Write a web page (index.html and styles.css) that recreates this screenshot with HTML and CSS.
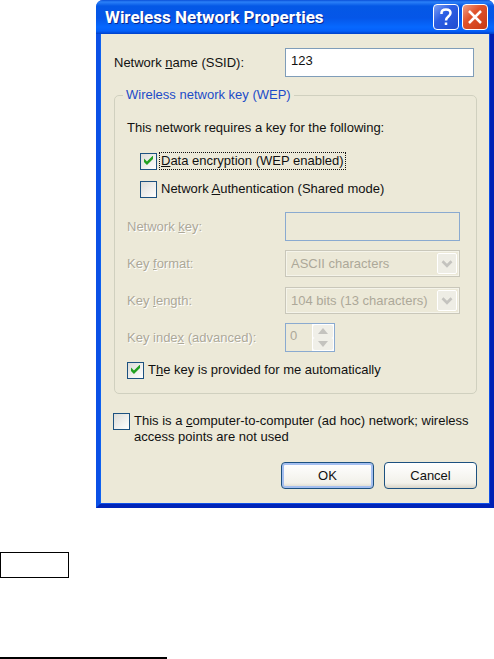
FILE: index.html
```html
<!DOCTYPE html>
<html lang="en">

<head>
  <meta charset="UTF-8">
  <meta name="viewport" content="width=device-width, initial-scale=1.0">
  <title>Wireless Network Properties</title>
  <link rel="stylesheet" href="styles.css">
</head>

<body>
  <form class="dialog">
    <!-- Title bar -->
    <header class="titlebar">
      <h1 class="title">Wireless Network Properties</h1>
      <button type="button" class="caption-button" aria-label="Help">
        <svg viewBox="0 0 20 20" width="20" height="20">
          <path d="M5.500 7V6C5.500 3.500 7.500 2.500 10 2.500s4.500 1 4.500 3.500c0 3.500-4.500 3.500-4.500 7.500" />
          <path d="M10 15.500V18" />
        </svg>
      </button>
      <button type="button" class="caption-button close" aria-label="Close">
        <svg viewBox="0 0 20 20" width="20" height="20">
          <path d="M4 4l12 12M16 4L4 16" />
        </svg>
      </button>
    </header>

    <div class="content">
      <div class="ssid-row">
        <label for="ssid">Network <u>n</u>ame (SSID):</label>
        <input type="text" class="field" id="ssid" value="123">
      </div>

      <fieldset class="group">
        <legend>Wireless network key (WEP)</legend>
        <p class="hint">This network requires a key for the following:</p>

        <div class="check-row indent">
          <input type="checkbox" class="check" id="encryption" checked>
          <label class="focused" for="encryption"><u>D</u>ata encryption (WEP enabled)</label>
        </div>
        <div class="check-row indent">
          <input type="checkbox" class="check" id="authentication">
          <label for="authentication">Network <u>A</u>uthentication (Shared mode)</label>
        </div>

        <!-- Key settings, disabled while the key is automatic -->
        <div class="key-grid">
          <label for="key">Network <u>k</u>ey:</label>
          <input type="text" class="field" id="key" disabled>

          <label for="format">Key <u>f</u>ormat:</label>
          <div class="select-box">
            <select id="format" disabled>
              <option>ASCII characters</option>
            </select>
            <svg class="arrow" viewBox="0 0 20 21" width="20" height="21">
              <path d="M5 8l5 5 5-5" />
            </svg>
          </div>

          <label for="length">Key <u>l</u>ength:</label>
          <div class="select-box">
            <select id="length" disabled>
              <option>104 bits (13 characters)</option>
            </select>
            <svg class="arrow" viewBox="0 0 20 21" width="20" height="21">
              <path d="M5 8l5 5 5-5" />
            </svg>
          </div>

          <label for="index">Key inde<u>x</u> (advanced):</label>
          <div class="spinner">
            <input type="text" id="index" value="0" disabled>
            <div class="spin-buttons">
              <button type="button" aria-label="Increase" disabled>
                <svg viewBox="0 0 10 6" width="10" height="6"><path d="M5 0l5 6H0z" /></svg>
              </button>
              <button type="button" aria-label="Decrease" disabled>
                <svg viewBox="0 0 10 6" width="10" height="6"><path d="M0 0h10L5 6z" /></svg>
              </button>
            </div>
          </div>
        </div>

        <div class="check-row">
          <input type="checkbox" class="check" id="automatic" checked>
          <label for="automatic">T<u>h</u>e key is provided for me automatically</label>
        </div>
      </fieldset>

      <div class="check-row adhoc">
        <input type="checkbox" class="check" id="adhoc">
        <label for="adhoc">This is a <u>c</u>omputer-to-computer (ad hoc) network; wireless access points are not used</label>
      </div>

      <div class="buttons">
        <button type="button" class="button default">OK</button>
        <button type="button" class="button">Cancel</button>
      </div>
    </div>
  </form>

  <div class="empty-box"></div>
  <hr class="rule">
</body>

</html>
```

FILE: styles.css
```css
* {
  box-sizing: border-box;
}

body {
  margin: 0;
  background-color: #fff;
  color: #111;
  font-family: "Liberation Sans", Arial, sans-serif;
  font-size: 13px;
  line-height: 16px;
}

input,
select,
button {
  margin: 0;
  color: inherit;
  font: inherit;
}

/* Dialog window */
.dialog {
  margin-left: 96px;
  border: solid #0a50e6;
  border-width: 0 4px 4px;
  border-right-color: #0020b4;
  border-bottom-color: #0024b8;
  border-radius: 7px 7px 0 0;
  background-color: #ece9d8;
  box-shadow: inset 1px 0 #0f62f0, inset -1px -1px #0f50e8;
}

.titlebar {
  display: flex;
  align-items: center;
  gap: 3px;
  height: 34px;
  margin: 0 -4px;
  padding: 0 6px 0 9px;
  border-radius: 7px 7px 0 0;
  background: linear-gradient(#0a4fd8 0, #2a80f8 2px, #0458e6 6px, #0556e8 18px, #0668ff 27px, #0460fa 31px, #0040c8 34px);
}

.title {
  flex: 1;
  margin: 0;
  color: #fff;
  font-family: Roboto, "Liberation Sans", sans-serif;
  font-size: 17px;
  font-weight: bold;
  white-space: nowrap;
  text-shadow: 1px 1px #0a2a90;
}

.caption-button {
  display: flex;
  align-items: center;
  justify-content: center;
  width: 26px;
  height: 26px;
  padding: 0;
  border: 1px solid #fff;
  border-radius: 4px;
  background: linear-gradient(135deg, #7da0f4, #2c5ee4 40%, #1e4cd0);
}

.caption-button.close {
  background: linear-gradient(135deg, #f0a088, #e0532c 40%, #c83a14);
}

.caption-button path {
  fill: none;
  stroke: #fff;
  stroke-width: 2.5;
}

.content {
  padding: 14px 13px 15px 14px;
}

.ssid-row {
  display: grid;
  grid-template-columns: 171px 1fr;
  align-items: center;
  margin-right: 3px;
}

.field {
  width: 100%;
  height: 29px;
  padding: 0 5px 4px;
  border: 1px solid #7f9db9;
  background-color: #fff;
}

.field:disabled {
  border-color: #8aaad0;
  background-color: transparent;
}

/* Key group */
.group {
  min-width: 0;
  margin: 9px 0 0;
  padding: 16px 16px 14px 12px;
  border: 1px solid #d0d0bf;
  border-radius: 5px;
}

.group legend {
  margin-left: -4px;
  padding: 0 3px;
  color: #1c4cc8;
  line-height: 18px;
}

.hint {
  margin: 0 0 16px;
}

.check-row {
  display: flex;
  align-items: center;
  gap: 3px;
  min-height: 18px;
}

.check-row.indent {
  margin: 0 0 10px 13px;
}

.check-row label {
  padding: 0 1px;
}

.check-row label.focused {
  outline: 1px dotted #111;
}

.check {
  appearance: none;
  flex: none;
  width: 17px;
  height: 17px;
  border: 1px solid #1c5180;
  background: linear-gradient(135deg, #dcdcd7, #fff);
}

.check:checked::before {
  content: "";
  display: block;
  width: 11px;
  height: 10px;
  margin: 2px;
  background-color: #21a121;
  clip-path: polygon(9% 30%, 36% 60%, 91% 0, 91% 35%, 36% 95%, 9% 65%);
}

.key-grid {
  display: grid;
  grid-template-columns: 158px 1fr;
  grid-auto-rows: 29px;
  gap: 8px 0;
  align-items: center;
  margin: 14px 0 9px;
  color: #aca899;
}

.key-grid label {
  text-shadow: 1px 1px #fff;
}

.select-box {
  position: relative;
  height: 27px;
  border: 1px solid #c9c7ba;
}

.select-box select {
  appearance: none;
  width: 100%;
  height: 100%;
  padding: 0 22px 0 4px;
  border: 1px solid #f5f4ea;
  border-radius: 0;
  background-color: transparent;
  opacity: 1;
}

/* drop button lies over the right end of the select */
.arrow {
  position: absolute;
  top: 2px;
  right: 2px;
  border: 1px solid #fff;
  border-radius: 2px;
  background-color: #eeede5;
  pointer-events: none;
}

.arrow path {
  fill: none;
  stroke: #c4c3bf;
  stroke-width: 3;
}

.spinner {
  display: flex;
  width: 50px;
  height: 29px;
  border: 1px solid #8aaad0;
}

.spinner input {
  flex: 1;
  min-width: 0;
  padding: 0 0 4px 4px;
  border: none;
  background-color: transparent;
}

.spin-buttons {
  display: flex;
  flex-direction: column;
  width: 22px;
  padding: 1px;
  background-color: #fff;
}

.spin-buttons button {
  display: flex;
  flex: 1;
  align-items: center;
  justify-content: center;
  padding: 0;
  border: none;
  border-radius: 2px;
  background-color: #f0efe8;
}

.spin-buttons path {
  fill: #c4c3bf;
}

/* Bottom part */
.check-row.adhoc {
  align-items: flex-start;
  margin: 19px 0 0 -1px;
}

.buttons {
  display: flex;
  justify-content: flex-end;
  gap: 10px;
  margin-top: 17px;
}

.button {
  width: 93px;
  height: 27px;
  padding: 0;
  border: 1px solid #1c5180;
  border-radius: 4px;
  background: linear-gradient(#fff, #f2f1ea 80%, #d8d4c8);
}

.button.default {
  box-shadow: inset 0 0 0 2px #a4bff0;
}

/* Marks under the dialog */
.empty-box {
  width: 69px;
  height: 26px;
  margin-top: 44px;
  border: 1px solid #000;
}

.rule {
  width: 167px;
  height: 2px;
  margin: 79px 0 0;
  border: none;
  background-color: #000;
}
```
